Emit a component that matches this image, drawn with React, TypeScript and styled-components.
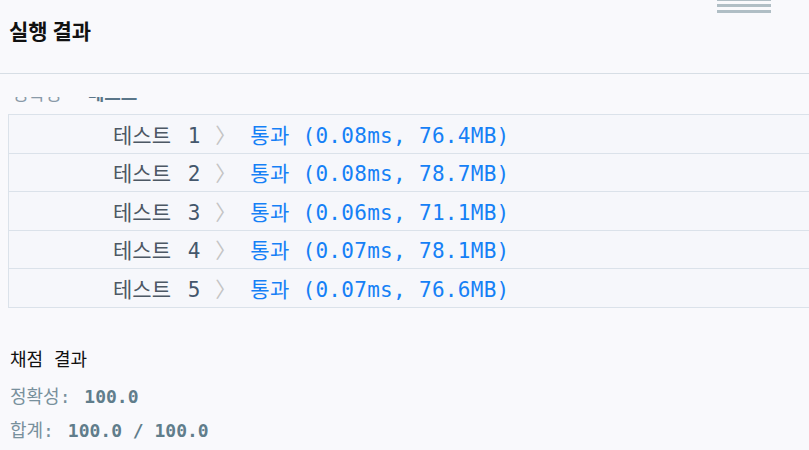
import React from "react";
import styled, { createGlobalStyle } from "styled-components";

const Global = createGlobalStyle`
  html, body { margin: 0; padding: 0; background: #f9f9fc; }
  body { font-family: "DejaVu Sans Mono", "Noto Sans CJK KR", monospace; }
`;

const MONO = `"DejaVu Sans Mono", "Noto Sans CJK KR", monospace`;

const Page = styled.div`
  position: relative;
  width: 809px;
  height: 450px;
  overflow: hidden;
  background: #f9f9fc;
`;

const Handle = styled.div`
  position: absolute;
  top: -2px;
  left: 717px;
  width: 54px;
  display: flex;
  flex-direction: column;
  gap: 3px;
`;

const Bar = styled.span`
  display: block;
  height: 3px;
  background: #b0bec5;
`;

const Header = styled.header`
  height: 74px;
  box-sizing: border-box;
  border-bottom: 1px solid #d7dee5;
  padding: 18px 0 0 9px;
`;

const Title = styled.h2`
  margin: 0;
  font-family: "Noto Sans CJK KR", "Noto Sans", sans-serif;
  font-size: 21px;
  line-height: 24px;
  font-weight: 700;
  color: #111;
`;

const Viewport = styled.div`
  margin-top: 23px;
  height: 353px;
  overflow: hidden;
`;

const Content = styled.div`
  margin-top: -15px;
`;

const GroupTitle = styled.div`
  font-family: ${MONO};
  font-size: 18px;
  line-height: 24px;
  padding-left: 12px;
  display: flex;
  gap: 26px;
`;

const GroupName = styled.span<{ $strong?: boolean }>`
  color: ${(p) => (p.$strong ? "#5a7689" : "#8a9aa8")};
  font-weight: ${(p) => (p.$strong ? 700 : 400)};
`;

const Table = styled.div`
  margin: 8px 0 0 8px;
  width: 840px;
  border: 1px solid #dbe2ea;
  border-bottom: none;
`;

const Row = styled.div`
  display: flex;
  align-items: center;
  height: 38.5px;
  box-sizing: border-box;
  border-bottom: 1px solid #dbe2ea;
  background: #f6f7fb;
  font-family: ${MONO};
  font-size: 21px;
  white-space: pre;
`;

const CaseLabel = styled.span`
  padding-left: 104px;
  color: #4d5864;
`;

const CaseNum = styled.span`
  color: #44576c;
  margin-left: 4px;
`;

const Chevron = styled.span`
  color: #c4c4c4;
  margin-left: 15px;
`;

const Pass = styled.span`
  color: #1580f6;
  margin-left: 14px;
  letter-spacing: 0.3px;
`;

const Score = styled.section`
  margin-top: 40px;
  padding-left: 10px;
  font-family: ${MONO};
`;

const ScoreTitle = styled.div`
  font-size: 18px;
  line-height: 24px;
  color: #111;
`;

const ScoreLine = styled.div<{ $gap: number }>`
  margin-top: ${(p) => p.$gap}px;
  font-size: 18px;
  line-height: 24px;
  color: #78909c;
`;

const ScoreValue = styled.span`
  color: #607d8b;
  font-weight: 700;
  margin-left: 3px;
`;

const results = [
  { n: 1, t: "0.08ms", m: "76.4MB" },
  { n: 2, t: "0.08ms", m: "78.7MB" },
  { n: 3, t: "0.06ms", m: "71.1MB" },
  { n: 4, t: "0.07ms", m: "78.1MB" },
  { n: 5, t: "0.07ms", m: "76.6MB" },
];

export default function App() {
  return (
    <>
      <Global />
      <Page>
        <Handle>
          <Bar />
          <Bar />
          <Bar />
        </Handle>
        <Header>
          <Title>실행 결과</Title>
        </Header>
        <Viewport>
          <Content>
            <GroupTitle>
              <GroupName>정확성</GroupName>
              <GroupName $strong>테스트</GroupName>
            </GroupTitle>
            <Table>
              {results.map((r) => (
                <Row key={r.n}>
                  <CaseLabel>
                    테스트<CaseNum> {r.n}</CaseNum>
                  </CaseLabel>
                  <Chevron>〉</Chevron>
                  <Pass>{`통과 (${r.t}, ${r.m})`}</Pass>
                </Row>
              ))}
            </Table>
            <Score>
              <ScoreTitle>채점 결과</ScoreTitle>
              <ScoreLine $gap={13}>
                정확성: <ScoreValue>100.0</ScoreValue>
              </ScoreLine>
              <ScoreLine $gap={10}>
                합계: <ScoreValue>100.0 / 100.0</ScoreValue>
              </ScoreLine>
            </Score>
          </Content>
        </Viewport>
      </Page>
    </>
  );
}
